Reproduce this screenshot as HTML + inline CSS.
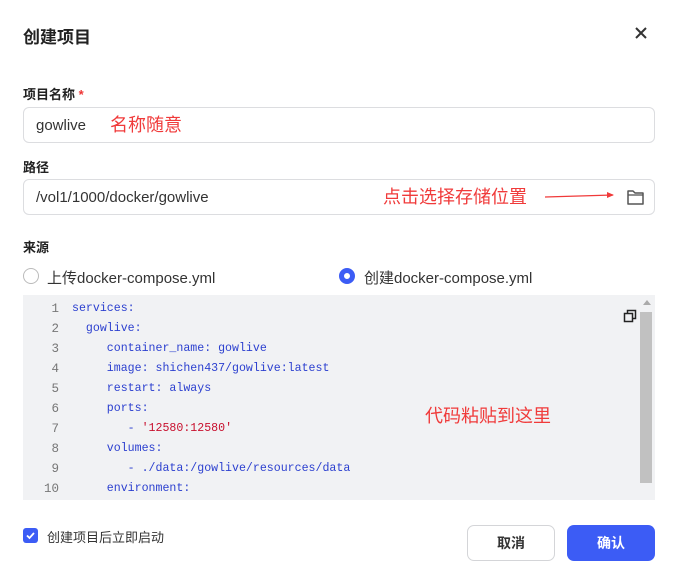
<!DOCTYPE html>
<html><head><meta charset="utf-8"><style>
*{margin:0;padding:0;box-sizing:border-box}
body{width:676px;height:582px;background:#fff;font-family:"Liberation Sans","Noto Sans CJK SC",sans-serif;color:#222;position:relative;overflow:hidden}
.a{position:absolute}
.title{left:23px;top:23px;font-size:17px;font-weight:bold}
.lbl{font-size:13px;font-weight:bold;color:#222}
.inp{left:23px;width:632px;height:36px;border:1px solid #dcdde0;border-radius:6px;font-size:15px;color:#333;padding:0 12px;line-height:36px}
.red{color:#f03a3a;font-size:18px}
.code{left:23px;top:295px;width:632px;height:205px;background:#f1f2f4;font-family:"Liberation Mono",monospace;font-size:11.6px}
.ln{position:absolute;left:0;width:36px;text-align:right;color:#777;font-size:12.5px}
.cl{position:absolute;left:49px;color:#2b3fcf;white-space:pre}
.btn{top:525px;height:36px;border-radius:7px;font-size:14px;font-weight:bold;text-align:center;line-height:34px}
</style></head><body>
<div class="a title">创建项目</div>
<svg class="a" style="left:634px;top:26px" width="14" height="14"><path d="M2 2L12 12M12 2L2 12" stroke="#333" stroke-width="2"/></svg>
<div class="a lbl" style="left:23px;top:84px">项目名称 <span style="color:#e33">*</span></div>
<div class="a inp" style="top:107px">gowlive</div>
<div class="a red" style="left:110px;top:111px">名称随意</div>
<div class="a lbl" style="left:23px;top:157px">路径</div>
<div class="a inp" style="top:179px">/vol1/1000/docker/gowlive</div>
<div class="a red" style="left:383px;top:183px">点击选择存储位置</div>
<svg class="a" style="left:545px;top:190px" width="70" height="10"><path d="M0 7L68 5" stroke="#f03a3a" stroke-width="1.2"/><path d="M62 2L69 5L62 8Z" fill="#f03a3a"/></svg>
<svg class="a" style="left:626px;top:188px" width="20" height="18"><path d="M2 3h5l2 2h8v11H2z" fill="none" stroke="#555" stroke-width="1.5" stroke-linejoin="round"/><path d="M2 7h15" stroke="#555" stroke-width="1.3"/></svg>
<div class="a lbl" style="left:23px;top:237px">来源</div>
<div class="a" style="left:23px;top:268px;width:16px;height:16px;border:1px solid #bbb;border-radius:50%"></div>
<div class="a" style="left:47px;top:267px;font-size:15px;color:#333">上传docker-compose.yml</div>
<div class="a" style="left:339px;top:268px;width:16px;height:16px;border:5px solid #3c5cf5;border-radius:50%;background:#fff"></div>
<div class="a" style="left:364px;top:267px;font-size:15px;color:#333">创建docker-compose.yml</div>
<div class="a code">
<div class="ln" style="top:7px">1</div><div class="cl" style="top:7px">services:</div>
<div class="ln" style="top:27px">2</div><div class="cl" style="top:27px">  gowlive:</div>
<div class="ln" style="top:47px">3</div><div class="cl" style="top:47px">     container_name: gowlive</div>
<div class="ln" style="top:67px">4</div><div class="cl" style="top:67px">     image: shichen437/gowlive:latest</div>
<div class="ln" style="top:87px">5</div><div class="cl" style="top:87px">     restart: always</div>
<div class="ln" style="top:107px">6</div><div class="cl" style="top:107px">     ports:</div>
<div class="ln" style="top:127px">7</div><div class="cl" style="top:127px">        - <span style="color:#c8102e">'12580:12580'</span></div>
<div class="ln" style="top:147px">8</div><div class="cl" style="top:147px">     volumes:</div>
<div class="ln" style="top:167px">9</div><div class="cl" style="top:167px">        - ./data:/gowlive/resources/data</div>
<div class="ln" style="top:187px">10</div><div class="cl" style="top:187px">     environment:</div>
<div class="a" style="left:617px;top:17px;width:12px;background:#c1c1c1;height:171px"></div>
<svg class="a" style="left:620px;top:5px" width="8" height="6"><path d="M0 5L4 0L8 5Z" fill="#aaa"/></svg>
<svg class="a" style="left:600px;top:14px" width="14" height="14"><rect x="1.5" y="4.5" width="8" height="8" fill="none" stroke="#222" stroke-width="1.5"/><path d="M4.5 4V1.5h8v8H10" fill="none" stroke="#222" stroke-width="1.5"/></svg>
</div>
<div class="a red" style="left:425px;top:402px">代码粘贴到这里</div>
<div class="a" style="left:23px;top:528px;width:15px;height:15px;background:#3c5cf5;border-radius:3px"></div>
<svg class="a" style="left:25px;top:530px" width="11" height="11"><path d="M2 5.5L4.5 8L9 3" fill="none" stroke="#fff" stroke-width="1.8"/></svg>
<div class="a" style="left:47px;top:527px;font-size:13px;color:#333">创建项目后立即启动</div>
<div class="a btn" style="left:467px;width:88px;border:1px solid #d4d5d8;color:#333">取消</div>
<div class="a btn" style="left:567px;width:88px;background:#3c5cf5;color:#fff;line-height:36px">确认</div>
</body></html>
